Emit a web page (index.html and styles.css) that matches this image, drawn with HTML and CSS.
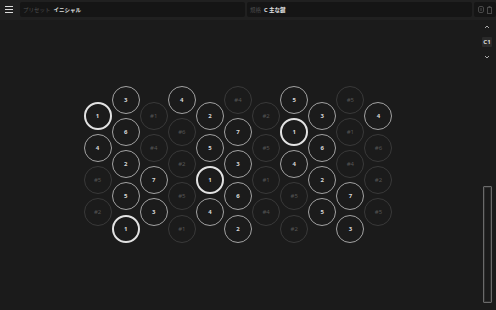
FILE: index.html
```html
<!DOCTYPE html>
<html lang="ja">
<head>
    <meta charset="UTF-8">
    <meta name="viewport" content="width=device-width, initial-scale=1.0">
    <title>キーボード</title>
    <link rel="stylesheet" href="styles.css">
</head>
<body>

<!-- Barra superior -->
<header class="topo">
    <div class="menu">
        <span></span><span></span><span></span>
    </div>
    <div class="campo">
        <span class="rotulo">プリセット</span>
        <span class="valor">イニシャル</span>
    </div>
    <div class="campo">
        <span class="rotulo">規格</span>
        <span class="valor">C 主な鍵</span>
    </div>
    <div class="acoes">
        <svg width="6" height="7" viewBox="0 0 6 7"><rect x="0.5" y="0.5" width="5" height="6" rx="1.5" fill="none" stroke="#4a4a4a"/><rect x="2.5" y="2" width="1" height="3" fill="#4a4a4a"/></svg>
        <svg width="5" height="8" viewBox="0 0 5 8"><rect x="1.5" y="0" width="2" height="1" fill="#4a4a4a"/><rect x="0.5" y="1.5" width="4" height="6" fill="none" stroke="#4a4a4a"/></svg>
    </div>
</header>

<div class="principal">
    <!-- Teclado -->
    <main class="area">
        <div class="teclado" id="teclado"></div>
    </main>

    <!-- Painel lateral -->
    <aside class="lateral">
        <div class="oitava">
            <svg width="6" height="4" viewBox="0 0 6 4"><path d="M1 3 L3 1 L5 3" fill="none" stroke="#aaa" stroke-width="1"/></svg>
            <span class="nota">C1</span>
            <svg width="6" height="4" viewBox="0 0 6 4"><path d="M1 1 L3 3 L5 1" fill="none" stroke="#aaa" stroke-width="1"/></svg>
        </div>
        <div class="rolagem"></div>
    </aside>
</div>

<script>
    // colunas do teclado: colunas pares tem 5 botoes, impares tem 4
    const colunas = [
        ["1*", "4", "#5", "#2"],
        ["3", "6", "2", "5", "1*"],
        ["#1", "#4", "7", "3"],
        ["4", "#6", "#2", "#5", "#1"],
        ["2", "5", "1*", "4"],
        ["#4", "7", "3", "6", "2"],
        ["#2", "#5", "#1", "#4"],
        ["5", "1*", "4", "#5", "#2"],
        ["3", "6", "2", "5"],
        ["#5", "#1", "#4", "7", "3"],
        ["4", "#6", "#2", "#5"]
    ];

    function gerarTeclado() {
        const teclado = document.getElementById("teclado");
        let html = '';
        colunas.forEach((coluna, i) => {
            html += `<div class="coluna ${coluna.length === 4 ? 'baixa' : ''}">`;
            coluna.forEach(tecla => {
                let classe = "botao";
                let texto = tecla;
                if (tecla.endsWith("*")) {
                    classe += " ativo";
                    texto = tecla.slice(0, -1);
                } else if (tecla.startsWith("#")) {
                    classe += " sustenido";
                }
                html += `<div class="${classe}">${texto}</div>`;
            });
            html += `</div>`;
        });
        teclado.innerHTML = html;
    }

    gerarTeclado();
</script>

</body>
</html>
```

FILE: styles.css
```css
/* Estilos Gerais */
body {
    margin: 0;
    background-color: #1b1b1b;
    font-family: "Noto Sans", "Noto Sans CJK JP", sans-serif;
    color: #ddd;
    height: 310px;
    display: flex;
    flex-direction: column;
    overflow: hidden;
}

/* Barra superior */
.topo {
    height: 20px;
    background-color: #202020;
    display: flex;
    align-items: flex-start;
    gap: 2px;
    box-sizing: border-box;
    padding-top: 2px;
}

.menu {
    width: 18px;
    height: 15px;
    display: flex;
    flex-direction: column;
    justify-content: center;
    align-items: center;
    gap: 1.5px;
}

.menu span {
    display: block;
    width: 8px;
    height: 1.5px;
    background-color: #ddd;
}

.campo {
    flex: 1;
    height: 15px;
    background-color: #151515;
    border-radius: 2px;
    display: flex;
    align-items: center;
    padding-left: 3px;
    gap: 3px;
    font-size: 5.5px;
}

.rotulo {
    color: #505050;
}

.valor {
    color: #e0e0e0;
    font-weight: bold;
}

.acoes {
    width: 22px;
    height: 15px;
    background-color: #151515;
    border-radius: 2px;
    display: flex;
    align-items: center;
    justify-content: center;
    gap: 3px;
}

/* Area principal */
.principal {
    flex: 1;
    display: flex;
}

.area {
    flex: 1;
    display: flex;
    justify-content: center;
    align-items: center;
    padding-bottom: 2px;
}

.teclado {
    display: flex;
}

.coluna {
    display: flex;
    flex-direction: column;
    gap: 4.25px;
    width: 28.1px;
    align-items: center;
    align-self: flex-start;
}

.coluna.baixa {
    margin-top: 16.1px;
}

.botao {
    width: 28px;
    height: 28px;
    border-radius: 50%;
    border: 1px solid #a2a2a2;
    box-sizing: border-box;
    display: flex;
    justify-content: center;
    align-items: center;
    font-size: 6px;
    font-weight: bold;
    color: #d8d8d8;
}

.botao.sustenido {
    border-color: #393939;
    color: #555;
    font-weight: normal;
}

.botao.ativo {
    border: 2px solid #e2e2e2;
}

/* Painel lateral */
.lateral {
    width: 20px;
    display: flex;
    flex-direction: column;
    align-items: center;
    padding-top: 5px;
    box-sizing: border-box;
}

.oitava {
    display: flex;
    flex-direction: column;
    align-items: center;
    gap: 8px;
    padding-left: 2px;
}

.nota {
    font-size: 6px;
    font-weight: bold;
    background-color: #2a2a2a;
    padding: 1px 1px;
    border-radius: 1px;
    line-height: 8px;
}

.rolagem {
    margin-top: auto;
    margin-bottom: 7px;
    margin-left: 3px;
    width: 9px;
    height: 117px;
    border: 1px solid #6a6a6a;
    border-radius: 1px;
    box-shadow: inset 0 0 0 1px #2e2e2e;
    box-sizing: border-box;
}
```
